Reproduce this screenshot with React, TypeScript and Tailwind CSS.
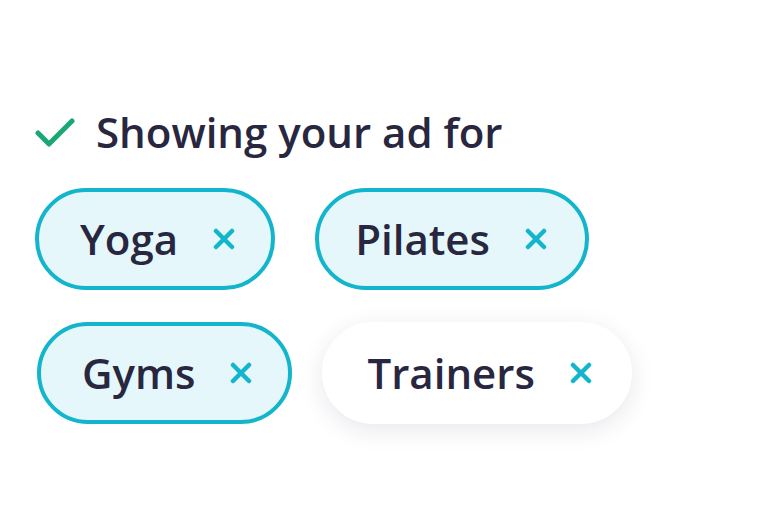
import { ReactNode } from "react";

const font = { fontFamily: '"Open Sans", "Noto Sans", sans-serif' };

function XMark() {
    return (
        <svg width="22" height="22" viewBox="0 0 22 22" className="shrink-0">
            <path d="M3 3L19 19M19 3L3 19" stroke="#12b5cb" strokeWidth="4.5" strokeLinecap="round"/>
        </svg>
    );
}

function Chip({label, active = true, className = "pl-[41px] pr-[36px] gap-[35px]"}: { label: ReactNode; active?: boolean; className?: string }) {
    const look = active
        ? "border-4 border-[#12b5cb] bg-[#e5f7fa]"
        : "border-4 border-white bg-white shadow-[0_6px_24px_rgba(20,30,60,0.10)]";
    return (
        <div className={`flex items-center h-[102px] rounded-full ${look} ${className}`}>
            <span className="text-[42px] font-semibold text-[#28273f] leading-none">{label}</span>
            <XMark/>
        </div>
    );
}

export default function App() {
    return (
        <div className="w-[768px] h-[512px] bg-white" style={font}>
            <div className="pt-[104px] pl-[36px]">
                <div className="flex items-center gap-[21px]">
                    <svg width="40" height="30" viewBox="0 0 40 30" className="mt-[2px] -ml-[1px]">
                        <path d="M3 15L14 26L37 3" fill="none" stroke="#1aa775" strokeWidth="5" strokeLinecap="round" strokeLinejoin="round"/>
                    </svg>
                    <span className="text-[42px] font-semibold text-[#28273f] leading-[56px]">Showing your ad for</span>
                </div>
                <div className="mt-[28px] flex flex-col gap-[32px]">
                    <div className="flex gap-[40px] -ml-[1px]">
                        <Chip label="Yoga"/>
                        <Chip label="Pilates" className="pl-[36px] pr-[38px] gap-[35px]"/>
                    </div>
                    <div className="flex gap-[30px] ml-[1px]">
                        <Chip label="Gyms"/>
                        <Chip label="Trainers" active={false}/>
                    </div>
                </div>
            </div>
        </div>
    );
}
